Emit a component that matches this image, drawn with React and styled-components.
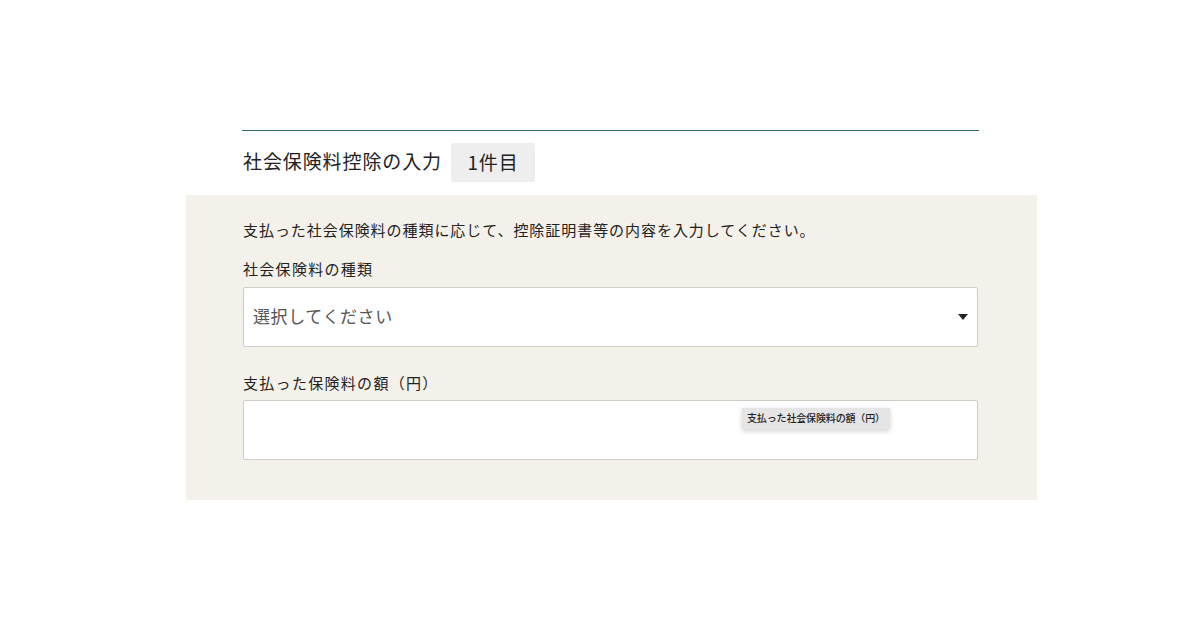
import React from 'react'
import styled, { createGlobalStyle } from 'styled-components'

const GlobalStyle = createGlobalStyle`
  html, body {
    margin: 0;
    padding: 0;
    background: #ffffff;
    font-family: "Noto Sans CJK JP", "Noto Sans", sans-serif;
    color: #222222;
  }
`

const Page = styled.div`
  width: 1200px;
  height: 630px;
  padding-top: 130px;
  box-sizing: border-box;
`

const Heading = styled.div`
  width: 736px;
  margin-left: 242px;
  border-top: 1px solid #2f6f50;
  display: flex;
  align-items: center;
  gap: 9px;
  padding: 12px 0 13px 1px;
`

const Title = styled.h2`
  margin: 0;
  padding-bottom: 3px;
  font-size: 19px;
  font-weight: 400;
  line-height: 26px;
  letter-spacing: 0.9px;
  color: #222;
`

const Badge = styled.span`
  display: inline-flex;
  align-items: center;
  justify-content: center;
  width: 84px;
  height: 39px;
  padding-bottom: 2px;
  box-sizing: border-box;
  background: #eeeeee;
  border-radius: 2px;
  font-size: 19px;
  letter-spacing: 0.9px;
  color: #222;
`

const Panel = styled.section`
  width: 851px;
  margin-left: 186px;
  box-sizing: border-box;
  background: #f4f1ea;
  padding: 24px 59px 40px 57px;
`

const Lead = styled.p`
  margin: 0;
  font-size: 15px;
  line-height: 22px;
  letter-spacing: 0.95px;
`

const Label = styled.div`
  font-size: 15px;
  line-height: 22px;
  letter-spacing: 1.3px;
  margin-top: ${p => p.$gap}px;
  margin-bottom: ${p => p.$below}px;
`

const Field = styled.div`
  position: relative;
  height: 60px;
  background: #ffffff;
  border: 1px solid #cfccc4;
  border-radius: 2px;
  box-sizing: border-box;
  display: flex;
  align-items: center;
  padding: 0 9px 0 9px;
`

const Placeholder = styled.span`
  flex: 1;
  padding-bottom: 3px;
  font-size: 17px;
  color: #555;
  letter-spacing: 0.6px;
`

const Arrow = styled.span`
  width: 0;
  height: 0;
  border-left: 5px solid transparent;
  border-right: 5px solid transparent;
  border-top: 6px solid #222;
`

const Tip = styled.span`
  position: absolute;
  left: 498px;
  top: 7px;
  padding: 3px 5px 4px;
  background: #e5e5e5;
  font-size: 10px;
  font-weight: 500;
  line-height: 14px;
  letter-spacing: -0.15px;
  color: #222;
  box-shadow: 0 2px 5px rgba(0, 0, 0, 0.18);
  white-space: nowrap;
`

export default function App() {
  return (
    <>
      <GlobalStyle />
      <Page>
        <Heading>
          <Title>社会保険料控除の入力</Title>
          <Badge>1件目</Badge>
        </Heading>
        <Panel>
          <Lead>支払った社会保険料の種類に応じて、控除証明書等の内容を入力してください。</Lead>
          <Label $gap={17} $below={7}>社会保険料の種類</Label>
          <Field>
            <Placeholder>選択してください</Placeholder>
            <Arrow />
          </Field>
          <Label $gap={25} $below={6}>支払った保険料の額（円）</Label>
          <Field>
            <Tip>支払った社会保険料の額（円）</Tip>
          </Field>
        </Panel>
      </Page>
    </>
  )
}
